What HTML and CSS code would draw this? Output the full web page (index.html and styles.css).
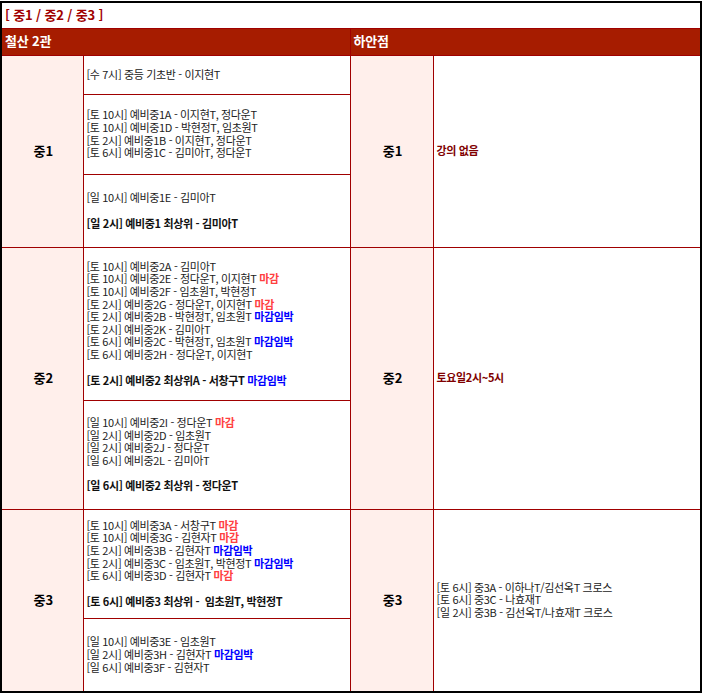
FILE: index.html
```html
<!DOCTYPE html>
<html lang="ko">
<head>
<meta charset="utf-8">
<title>시간표</title>
<link rel="stylesheet" href="styles.css">
</head>
<body>
<div class="frame">
<h1 class="title">[ 중1 / 중2 / 중3 ]</h1>
<table class="timetable">
<colgroup><col class="c-grade"><col class="c-list"><col class="c-grade2"><col class="c-list2"></colgroup>
<thead>
<tr class="head"><th colspan="2">철산 2관</th><th colspan="2">하안점</th></tr>
</thead>
<tbody>
<tr class="r1a">
<th rowspan="3" class="grade">중1</th>
<td>[수 7시] 중등 기초반 - 이지현T</td>
<th rowspan="3" class="grade">중1</th>
<td rowspan="3" class="none">강의 없음</td>
</tr>
<tr class="r1b"><td>[토 10시] 예비중1A - 이지현T, 정다운T<br>[토 10시] 예비중1D - 박현정T, 임초원T<br>[토 2시] 예비중1B - 이지현T, 정다운T<br>[토 6시] 예비중1C - 김미아T, 정다운T</td></tr>
<tr class="r1c"><td>[일 10시] 예비중1E - 김미아T<p class="top"><b>[일 2시] 예비중1 최상위 - 김미아T</b></p></td></tr>
<tr class="r2a">
<th rowspan="2" class="grade">중2</th>
<td>[토 10시] 예비중2A - 김미아T<br>[토 10시] 예비중2E - 정다운T, 이지현T <b class="closed">마감</b><br>[토 10시] 예비중2F - 임초원T, 박현정T<br>[토 2시] 예비중2G - 정다운T, 이지현T <b class="closed">마감</b><br>[토 2시] 예비중2B - 박현정T, 임초원T <b class="soon">마감임박</b><br>[토 2시] 예비중2K - 김미아T<br>[토 6시] 예비중2C - 박현정T, 임초원T <b class="soon">마감임박</b><br>[토 6시] 예비중2H - 정다운T, 이지현T<p class="top"><b>[토 2시] 예비중2 최상위A - 서창구T <span class="soon">마감임박</span></b></p></td>
<th rowspan="2" class="grade">중2</th>
<td rowspan="2" class="none">토요일2시~5시</td>
</tr>
<tr class="r2b"><td>[일 10시] 예비중2I - 정다운T <b class="closed">마감</b><br>[일 2시] 예비중2D - 임초원T<br>[일 2시] 예비중2J - 정다운T<br>[일 6시] 예비중2L - 김미아T<p class="top"><b>[일 6시] 예비중2 최상위 - 정다운T</b></p></td></tr>
<tr class="r3a">
<th rowspan="2" class="grade">중3</th>
<td>[토 10시] 예비중3A - 서창구T <b class="closed">마감</b><br>[토 10시] 예비중3G - 김현자T <b class="closed">마감</b><br>[토 2시] 예비중3B - 김현자T <b class="soon">마감임박</b><br>[토 2시] 예비중3C - 임초원T, 박현정T <b class="soon">마감임박</b><br>[토 6시] 예비중3D - 김현자T <b class="closed">마감</b><p class="top"><b>[토 6시] 예비중3 최상위 -&nbsp; 임초원T, 박현정T</b></p></td>
<th rowspan="2" class="grade">중3</th>
<td rowspan="2" class="cross">[토 6시] 중3A - 이하나T/김선옥T 크로스<br>[토 6시] 중3C - 나효재T<br>[일 2시] 중3B - 김선옥T/나효재T 크로스</td>
</tr>
<tr class="r3b"><td>[일 10시] 예비중3E - 임초원T<br>[일 2시] 예비중3H - 김현자T <b class="soon">마감임박</b><br>[일 6시] 예비중3F - 김현자T</td></tr>
</tbody>
</table>
</div>
</body>
</html>
```
FILE: styles.css
```css
html, body { margin: 0; padding: 0; background: #fff; }
body {
  font-family: "Noto Sans CJK KR", "Noto Sans", sans-serif;
  font-size: 11px;
  letter-spacing: -0.35px;
  color: #222;
}
.frame {
  box-sizing: border-box;
  width: 702px;
  height: 692px;
  margin-top: 1px;
  border: 2px solid #000;
  overflow: hidden;
}
.title {
  margin: 0;
  height: 25px;
  padding-left: 3px;
  font-size: 13px;
  line-height: 24px;
  font-weight: 700;
  letter-spacing: -0.15px;
  color: #a00000;
}
.timetable {
  width: 698px;
  table-layout: fixed;
  border-collapse: collapse;
  line-height: 12.6px;
}
.c-grade { width: 81px; }
.c-list { width: 267px; }
.c-grade2 { width: 83px; }
.c-list2 { width: 267px; }
.timetable td, .timetable th { border: 1px solid #a00000; padding: 0 2px 2px 3px; }
.timetable td:first-child, .timetable th:first-child { border-left: 0; }
.timetable td:last-child, .timetable th:last-child { border-right: 0; }
.timetable tr:last-child td, .timetable tr:last-child th { border-bottom: 0; }
.timetable .head th {
  height: 25px;
  background: #a61c00;
  color: #fff;
  font-size: 13px;
  letter-spacing: -0.2px;
  text-align: left;
  padding: 0 2px 1px 3px;
}
.timetable .grade {
  background: #ffefeb;
  color: #000;
  font-size: 13px;
  letter-spacing: 0;
  text-align: center;
  padding: 0 0 1px 2px;
}
.none { color: #800000; font-weight: 700; }
.top { margin: 13px 0 0; }
b { color: #111; }
.closed { color: #ff4040; }
.soon { color: #0000ff; }
.r1a { height: 39px; }
.r1b { height: 80px; }
.r1c { height: 73px; }
.r2a { height: 153px; }
.r2b { height: 109px; }
.r3a { height: 109px; }
.r3b { height: 73px; }
```
